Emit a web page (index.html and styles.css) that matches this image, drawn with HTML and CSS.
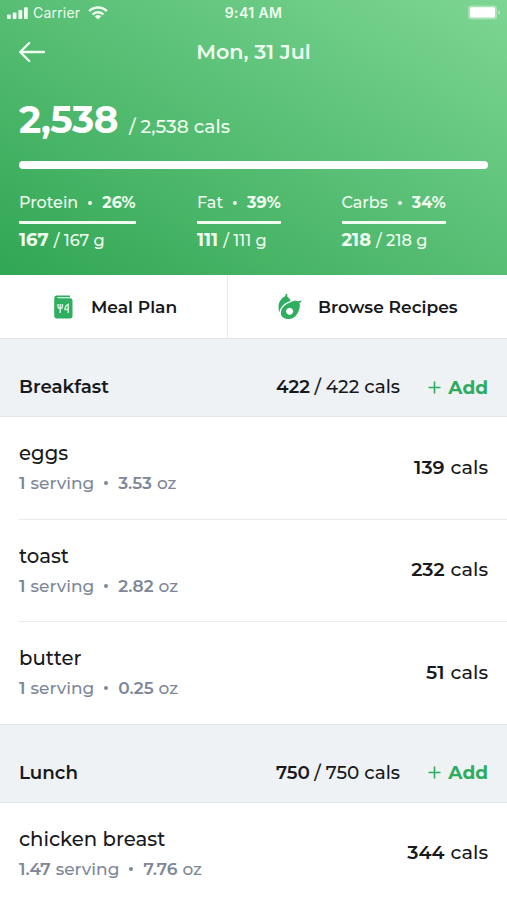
FILE: index.html
```html
<!DOCTYPE html>
<html lang="en">
<head>
<meta charset="utf-8">
<title>Food Diary</title>
<link rel="stylesheet" href="styles.css">
</head>
<body>
<header class="hero">
  <div class="status">
    <div class="status-left">
      <svg class="signal" width="22" height="14" viewBox="0 0 22 14" fill="currentColor"><rect x="0" y="8.5" width="3.8" height="4.5" rx="1"/><rect x="5.7" y="6.5" width="3.8" height="6.5" rx="1"/><rect x="11.4" y="4" width="3.8" height="9" rx="1"/><rect x="17" y="1.2" width="3.8" height="11.8" rx="1"/></svg>
      <span class="carrier">Carrier</span>
      <svg class="wifi" width="20" height="14" viewBox="0 0 20 14" fill="none" stroke="currentColor" stroke-width="2.5"><path d="M1.200 5.200a12.300 12.300 0 0 1 17.600 0M4.500 8.500a7.700 7.700 0 0 1 11 0"/><path d="M10 13.500 6.800 10.300a4.600 4.600 0 0 1 6.400 0z" fill="currentColor" stroke="none"/></svg>
    </div>
    <span class="time">9:41 AM</span>
    <svg class="battery" width="33" height="15" viewBox="0 0 33 15"><rect x="0" y="0.5" width="29" height="14" rx="3" fill="#fff" opacity=".35"/><rect x="2" y="2.3" width="25" height="10.2" rx="1.5" fill="#fff"/><path d="M30 5v5q2-1 2-2.500T30 5z" fill="#fff" opacity=".4"/></svg>
  </div>
  <div class="nav">
    <svg class="back" width="28" height="22" viewBox="0 0 28 22" fill="none" stroke="currentColor" stroke-width="2.3" stroke-linecap="round" stroke-linejoin="round"><path d="M10.200 2 1.200 11 10.200 20M1.200 11H25"/></svg>
    <h1 class="title">Mon, 31 Jul</h1>
  </div>
  <div class="total"><strong class="total-now">2,538</strong><span class="total-goal">/ 2,538 cals</span></div>
  <div class="bar"></div>
  <div class="macros">
    <div class="macro">
      <div class="macro-name"><span>Protein</span><i class="dot"></i><b>26%</b></div>
      <div class="macro-value"><b>167</b><span>/ 167 g</span></div>
    </div>
    <div class="macro">
      <div class="macro-name"><span>Fat</span><i class="dot"></i><b>39%</b></div>
      <div class="macro-value"><b>111</b><span>/ 111 g</span></div>
    </div>
    <div class="macro">
      <div class="macro-name"><span>Carbs</span><i class="dot"></i><b>34%</b></div>
      <div class="macro-value"><b>218</b><span>/ 218 g</span></div>
    </div>
  </div>
</header>
<nav class="tabs">
  <a class="tab tab-plan">
    <svg width="19" height="24" viewBox="0 0 19 24"><path d="M3 .5h13v1.700H3.500q-1 .5 0 1H16q2.500 0 2.500 2V21q0 2.500-2.500 2.500H3Q.2 23.500.2 20.500v-17Q.2.500 3 .500z" fill="#2fae60"/><path d="M4 9v2.300q0 2.300 2.200 2.300t2.200-2.300V9M6.200 9v9M14.200 18V9.300q-3.300 1.500-3.200 5.200h3.200" fill="none" stroke="#d9f5e3" stroke-width="1.400"/></svg>
    <span>Meal Plan</span>
  </a>
  <a class="tab tab-recipes">
    <svg width="24" height="27" viewBox="0 0 24 27"><path d="M1.500 19.500C-.6 14 .4 8 5 4.600L7.400 3 7.800.8l1.500.3-.1 2.300 2.400 2.400.9 2.400C6.500 9.500 2.300 13.500 1.500 19.500z" fill="#2fae60"/><path fill-rule="evenodd" d="M2.800 20C3.200 14.500 7.500 10.700 12.700 9.200 14.700 8.200 17 7.500 19 8L20.600 8.300 22.900 7.500 23.500 8.700 21.400 10.100C22.200 12 21.900 14.500 21 17 19.300 22 16 26 11.300 26 6.500 26 2.800 24 2.800 20zM11.600 14.700a3.600 3.600 0 1 0 .01 0z" fill="#2fae60"/></svg>
    <span>Browse Recipes</span>
  </a>
</nav>
<main>
  <section>
    <div class="meal">
      <h2>Breakfast</h2>
      <div class="meal-cals"><b>422</b><span>/ 422 cals</span></div>
      <a class="add"><svg width="13" height="13" viewBox="0 0 13 13" stroke="currentColor" stroke-width="1.600"><path d="M6.500 .5v12M.5 6.500h12"/></svg><span>Add</span></a>
    </div>
    <div class="food">
      <div><div class="food-name">eggs</div><div class="food-info"><b>1</b><span>serving</span><i class="dot"></i><b>3.53</b><span>oz</span></div></div>
      <div class="food-cals"><b>139</b><span>cals</span></div>
    </div>
    <div class="food">
      <div><div class="food-name">toast</div><div class="food-info"><b>1</b><span>serving</span><i class="dot"></i><b>2.82</b><span>oz</span></div></div>
      <div class="food-cals"><b>232</b><span>cals</span></div>
    </div>
    <div class="food">
      <div><div class="food-name">butter</div><div class="food-info"><b>1</b><span>serving</span><i class="dot"></i><b>0.25</b><span>oz</span></div></div>
      <div class="food-cals"><b>51</b><span>cals</span></div>
    </div>
  </section>
  <section>
    <div class="meal">
      <h2>Lunch</h2>
      <div class="meal-cals"><b>750</b><span>/ 750 cals</span></div>
      <a class="add"><svg width="13" height="13" viewBox="0 0 13 13" stroke="currentColor" stroke-width="1.600"><path d="M6.500 .5v12M.5 6.500h12"/></svg><span>Add</span></a>
    </div>
    <div class="food">
      <div><div class="food-name">chicken breast</div><div class="food-info"><b>1.47</b><span>serving</span><i class="dot"></i><b>7.76</b><span>oz</span></div></div>
      <div class="food-cals"><b>344</b><span>cals</span></div>
    </div>
  </section>
</main>
</body>
</html>
```
FILE: styles.css
```css
* { box-sizing: border-box; }
body {
  margin: 0;
  height: 900px;
  overflow: hidden;
  background: #fff;
  color: #17191c;
  font-family: Montserrat, Inter, "Liberation Sans", sans-serif;
  font-weight: 500;
}
h1, h2 { margin: 0; font-weight: 600; }
b, strong { font-weight: 700; }

.hero {
  height: 275px;
  padding: 0 19px;
  color: #effcf0;
  background: linear-gradient(to top right, #31a653 0%, #57be74 50%, #7dd693 100%);
}
.status {
  display: grid;
  grid-template-columns: 1fr auto 1fr;
  align-items: center;
  height: 26px;
  margin: 0 -12px;
  padding-bottom: 1px;
  font-family: Inter, "Liberation Sans", sans-serif;
  font-size: 14px;
}
.status-left { display: flex; align-items: center; }
.carrier { margin-left: 4px; font-weight: 400; letter-spacing: 0.2px; }
.wifi { margin-left: 8px; }
.time { font-weight: 600; font-size: 14px; letter-spacing: 0.4px; }
.battery { justify-self: end; margin-right: -1px; }
.nav {
  display: grid;
  grid-template-columns: 28px 1fr 28px;
  align-items: center;
  height: 52px;
}
.title { padding-bottom: 2px; text-align: center; font-size: 20.7px; }

.total { display: flex; align-items: baseline; height: 83px; padding-top: 19px; line-height: 46px; }
.total-now { font-size: 37.5px; letter-spacing: -0.5px; color: #fff; }
.total-goal { margin-left: 11px; font-size: 18.6px; }
.bar { height: 8px; border-radius: 4px; background: #fff; }

.macros { display: grid; grid-template-columns: 178px 144.5px 1fr; justify-items: start; margin-top: 23px; }
.macro-name {
  display: flex;
  align-items: center;
  height: 32px;
  padding-bottom: 8px;
  border-bottom: 3px solid #effcf0;
  border-radius: 1px;
  font-size: 16px;
  line-height: 21px;
}
.dot { width: 4px; height: 4px; margin: 1px 10px 0; border-radius: 50%; background: currentColor; }
.macro-value { display: flex; align-items: baseline; gap: 5px; margin-top: 4px; line-height: 24px; font-size: 16.2px; }
.macro-value b { font-size: 18px; }

.tabs {
  display: grid;
  grid-template-columns: 228px 1fr;
  height: 64px;
  border-bottom: 1px solid #e2e6e9;
  font-size: 17.1px;
  font-weight: 600;
}
.tab { display: flex; align-items: center; }
.tab-plan { padding-left: 54px; gap: 18px; border-right: 1px solid #e8ebed; }
.tab-recipes { padding-left: 50px; gap: 16px; }

.meal {
  display: grid;
  grid-template-columns: 1fr 124px 88px;
  align-items: center;
  height: 78px;
  padding: 18px 19px 0;
  background: #eef2f5;
  border-bottom: 1px solid #e5e9ec;
}
h2 { font-size: 18.3px; }
.meal-cals { display: flex; align-items: baseline; justify-content: space-between; font-size: 18.4px; }
.meal-cals b { font-weight: 600; }
.add { display: flex; align-items: center; justify-content: flex-end; gap: 7px; padding-top: 1px; color: #2fab60; font-size: 18.5px; font-weight: 700; }

.food {
  display: flex;
  align-items: center;
  justify-content: space-between;
  height: 102.5px;
  margin-left: 19px;
  padding-right: 19px;
  border-bottom: 1px solid #e8ebed;
}
.food:last-child { margin-left: 0; padding-left: 19px; border-bottom-color: #e0e5e8; }
.food-name { font-size: 19.7px; line-height: 26px; }
.food-info { display: flex; align-items: baseline; gap: 5px; margin-top: 5px; color: #7d8799; font-size: 17px; line-height: 24px; }
.food-info .dot { align-self: center; margin: 0 5px; }
.food-info b { font-weight: 600; }
.food-cals { display: flex; align-items: baseline; gap: 6px; padding-bottom: 2px; font-size: 19.2px; }
.food-cals b { font-weight: 600; }
```
